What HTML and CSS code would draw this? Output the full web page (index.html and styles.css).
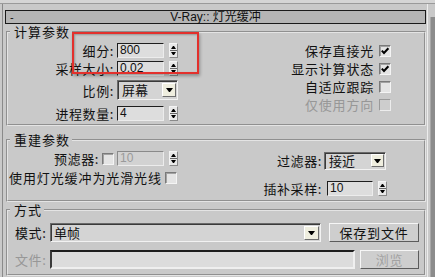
FILE: index.html
```html
<!DOCTYPE html>
<html>
<head>
<meta charset="utf-8">
<link rel="stylesheet" href="styles.css">
</head>
<body>
<div class="win">
  <div class="topstrip"></div>
  <div class="body">
    <div class="main">
      <div class="titlebar"><span class="minus">-</span><span class="title">V-Ray:: 灯光缓冲</span><span></span></div>

      <fieldset class="grp">
        <legend>计算参数</legend>
        <div class="g1-in">
          <div class="col-left">
            <div class="row r1"><span class="lbl">细分:</span><span class="num">800</span><span class="spin"></span></div>
            <div class="row r2"><span class="lbl">采样大小:</span><span class="num">0.02</span><span class="spin"></span></div>
            <div class="row r3"><span class="lbl">比例:</span><span class="combo scale"><span class="ctext">屏幕</span><span class="arrow"></span></span></div>
            <div class="row r4"><span class="lbl">进程数量:</span><span class="num">4</span><span class="spin"></span></div>
          </div>
          <div class="col-right">
            <div class="chk">保存直接光<span class="box"><svg viewBox="0 0 10 10" width="10" height="10"><path d="M1.8 4.6 L4 7 L8.4 2.2" stroke="#000" stroke-width="2" fill="none"/></svg></span></div>
            <div class="chk">显示计算状态<span class="box"><svg viewBox="0 0 10 10" width="10" height="10"><path d="M1.8 4.6 L4 7 L8.4 2.2" stroke="#000" stroke-width="2" fill="none"/></svg></span></div>
            <div class="chk">自适应跟踪<span class="box"></span></div>
            <div class="chk dis">仅使用方向<span class="box off"></span></div>
          </div>
        </div>
      </fieldset>

      <fieldset class="grp g2">
        <legend>重建参数</legend>
        <div class="g2-in">
          <div class="g2-left">
            <div class="row pre"><span class="lbl2">预滤器:</span><span class="box"></span><span class="num off">10</span><span class="spin"></span></div>
            <div class="row smooth">使用灯光缓冲为光滑光线<span class="box"></span></div>
          </div>
          <div class="g2-right">
            <span class="lbl3">过滤器:</span>
            <span class="combo filt"><span class="ctext">接近</span><span class="arrow"></span></span>
            <span class="lbl3">插补采样:</span>
            <span class="ctl"><span class="num interp">10</span><span class="spin"></span></span>
          </div>
        </div>
      </fieldset>

      <fieldset class="grp g3">
        <legend>方式</legend>
        <div class="g3-in">
          <div class="row3">
            <span class="lbl4">模式:</span>
            <span class="combo mode"><span class="ctext">单帧</span><span class="arrow"></span></span>
            <span class="btn save">保存到文件</span>
          </div>
          <div class="row3 second">
            <span class="lbl4 dis">文件:</span>
            <span class="field"></span>
            <span class="btn browse dis">浏览</span>
          </div>
        </div>
      </fieldset>
    </div>
    <div class="scroll"></div>
  </div>
  <div class="hl"></div>
</div>
</body>
</html>
```

FILE: styles.css
```css
body {
  margin: 0;
  background: #c9c9c9;
  font-family: "Noto Sans CJK SC", sans-serif;
  font-size: 13px;
  color: #111;
}

.win {
  width: 435px;
  height: 277px;
  position: relative;
  overflow: hidden;
  display: flex;
  flex-direction: column;
}

.topstrip {
  flex: none;
  height: 3px;
  background: #d5d5d5;
  border-bottom: 1px solid #9a9a9a;
}

.body {
  flex: 1;
  display: flex;
  padding-left: 2px;
}

.main {
  width: 426px;
  box-sizing: border-box;
  border-left: 1px solid #8a8a8a;
  border-right: 1px solid #ececec;
  padding: 0 1px 0 2px;
}

.scroll {
  width: 5px;
  margin-left: 2px;
  margin-top: 13px;
  background: #8c8c8c;
  border-left: 1px solid #a8a8a8;
  box-sizing: border-box;
}

.titlebar {
  margin-top: 6px;
  height: 14px;
  box-sizing: border-box;
  border: 1px solid #1a1a1a;
  background: #b5b5b5;
  display: grid;
  grid-template-columns: 1fr auto 1fr;
  align-items: center;
  font-family: "Liberation Sans", "Noto Sans CJK SC", sans-serif;
  font-size: 12px;
  line-height: 12px;
}

.minus {
  padding-left: 4px;
  font-size: 11px;
}

.grp {
  margin: 1px 0 0 1px;
  padding: 0;
  border: 2px groove #e4e4e4;
  min-width: 0;
}

.grp legend {
  margin-left: 2px;
  padding: 0 2px 0 4px;
  font-size: 13px;
  letter-spacing: 1px;
  line-height: 14px;
}

.g2 { margin-top: 7px; }
.g3 { margin-top: 1px; }

/* group 1 */
.g1-in {
  height: 85px;
  box-sizing: border-box;
  padding: 4px 33px 0 0;
  display: flex;
  justify-content: space-between;
}

.row {
  display: flex;
  align-items: center;
}

.r1, .r2, .r4 { height: 15px; }
.r2 { margin-top: 3px; }
.r3 { height: 20px; margin-top: 4px; }
.r4 { margin-top: 6px; }

.lbl {
  width: 106px;
  margin-right: 3px;
  text-align: right;
  line-height: 15px;
  letter-spacing: 0.6px;
}

.num {
  width: 47px;
  height: 15px;
  box-sizing: border-box;
  border: 1px solid;
  border-color: #1e1e1e #ececec #ececec #1e1e1e;
  background: #dddddd;
  font-family: "Liberation Sans", sans-serif;
  font-size: 12px;
  line-height: 13px;
  padding-left: 2px;
}

.num.off {
  color: #9a9a9a;
  border-color: #8a8a8a #ececec #ececec #8a8a8a;
  background: #d2d2d2;
}

.spin {
  width: 9px;
  height: 15px;
  margin-left: 5px;
  box-sizing: border-box;
  border: 1px solid;
  border-color: #f4f4f4 #8a8a8a #8a8a8a #f4f4f4;
  background: linear-gradient(#e8e8e8 0 6px, #666 6px 7px, #e8e8e8 7px);
  position: relative;
}

.spin::before,
.spin::after {
  content: "";
  position: absolute;
  left: 1px;
  width: 1px;
  border-left: 2px solid transparent;
  border-right: 2px solid transparent;
}

.spin::before {
  top: 2px;
  border-bottom: 3px solid #000;
}

.spin::after {
  bottom: 2px;
  border-top: 3px solid #000;
}

.combo {
  display: flex;
  align-items: center;
  justify-content: space-between;
  box-sizing: border-box;
  border: 1px solid;
  border-color: #6a6a6a #f2f2f2 #f2f2f2 #6a6a6a;
  box-shadow: inset 1px 1px 0 #3a3a3a;
  background: #d4d4d4;
  padding-left: 4px;
}

.ctext {
  line-height: 14px;
}

.arrow {
  width: 14px;
  height: 14px;
  box-sizing: border-box;
  background: #efeedf;
  border: 1px solid;
  border-color: #ffffff #6e6e6e #6e6e6e #ffffff;
  margin-right: 1px;
  display: flex;
  align-items: center;
  justify-content: center;
}

.arrow::after {
  content: "";
  width: 1px;
  border-top: 4px solid #000;
  border-left: 3px solid transparent;
  border-right: 3px solid transparent;
}

.scale {
  width: 61px;
  height: 20px;
}

.col-right {
  display: flex;
  flex-direction: column;
  align-items: flex-end;
  gap: 5px;
  margin-top: 1px;
}

.chk {
  display: flex;
  align-items: center;
  height: 13px;
  line-height: 13px;
  letter-spacing: 0.8px;
}

.box {
  width: 12px;
  height: 12px;
  box-sizing: border-box;
  border: 1px solid;
  border-color: #7a7a7a #f4f4f4 #f4f4f4 #7a7a7a;
  box-shadow: inset 1px 1px 0 #a2a2a2;
  background: #e4e4e4;
  display: flex;
  align-items: center;
  justify-content: center;
  letter-spacing: 0;
}

.chk .box {
  margin-left: 5px;
}

.box.off {
  background: #cdcdcd;
  border-color: #9a9a9a #ececec #ececec #9a9a9a;
  box-shadow: none;
}

.dis {
  color: #979797;
}

/* group 2 */
.g2-in {
  height: 53px;
  box-sizing: border-box;
  padding: 4px 34px 0 0;
  display: flex;
  justify-content: space-between;
}

.pre {
  height: 15px;
}

.lbl2 {
  width: 91px;
  margin-right: 3px;
  text-align: right;
  letter-spacing: 0.6px;
}

.pre .box {
  margin-right: 3px;
}

.smooth {
  margin-top: 5px;
  height: 13px;
  padding-left: 1px;
  letter-spacing: 0.9px;
}

.smooth .box {
  margin-left: 3px;
}

.g2-right {
  display: grid;
  grid-template-columns: auto 66px;
  row-gap: 9px;
  align-items: center;
  align-content: start;
}

.lbl3 {
  text-align: right;
  margin-right: 2px;
  letter-spacing: 0.6px;
}

.filt {
  width: 62px;
  height: 18px;
}

.filt .arrow {
  height: 13px;
  width: 13px;
}

.ctl {
  display: flex;
  align-items: center;
}

.interp {
  margin-left: 3px;
  width: 46px;
}

/* group 3 */
.g3-in {
  height: 57px;
  box-sizing: border-box;
  padding: 6px 5px 0 7px;
}

.row3 {
  display: flex;
  align-items: center;
  height: 19px;
}

.second {
  margin-top: 8px;
}

.lbl4 {
  width: 35px;
  flex: none;
  letter-spacing: 0.6px;
}

.mode {
  flex: 1;
  height: 19px;
  padding-left: 3px;
}

.mode .arrow {
  width: 15px;
}

.btn {
  flex: none;
  box-sizing: border-box;
  height: 19px;
  border: 1px solid;
  border-color: #f6f6f6 #5c5c5c #5c5c5c #f6f6f6;
  background: #cecece;
  text-align: center;
  line-height: 17px;
  letter-spacing: 0.8px;
}

.save {
  width: 90px;
  margin-left: 8px;
}

.browse {
  width: 59px;
  margin-left: 5px;
  color: #a2a2a2;
}

.field {
  flex: 1;
  height: 19px;
  box-sizing: border-box;
  border: 2px solid;
  border-color: #1e1e1e #efefef #efefef #3a3a3a;
  background: #dcdcdc;
}

/* annotation overlay */
.hl {
  position: absolute;
  left: 72px;
  top: 32px;
  width: 127px;
  height: 42px;
  box-sizing: border-box;
  border: 2px solid #e3302c;
  box-shadow: 1px 2px 3px rgba(0, 0, 0, 0.3), inset 1px 1px 2px rgba(0, 0, 0, 0.25);
}
```
